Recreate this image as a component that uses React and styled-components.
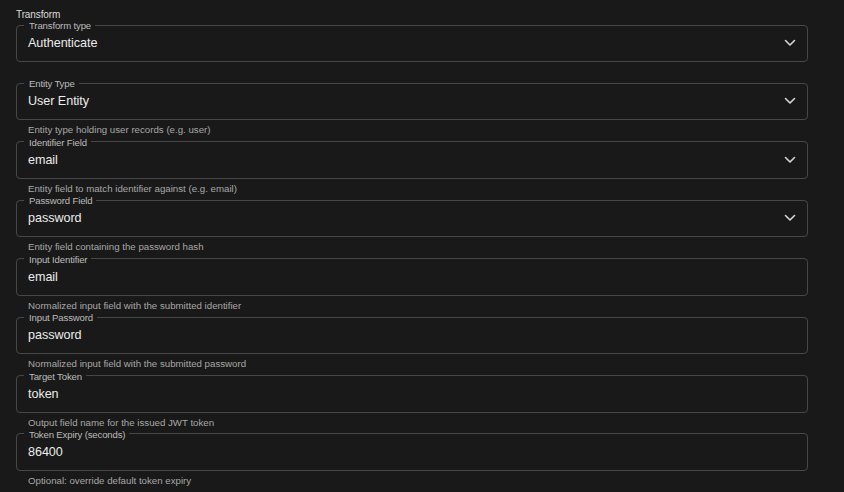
import React from 'react';
import styled, { createGlobalStyle } from 'styled-components';

const GlobalStyle = createGlobalStyle`
  html, body {
    margin: 0;
    padding: 0;
    background: #191919;
  }
  body {
    font-family: "Liberation Sans", Arial, sans-serif;
    -webkit-font-smoothing: antialiased;
  }
`;

const Page = styled.div`
  padding: 8px 0 0 16px;
  width: 792px;
`;

const Title = styled.div`
  color: #dcdcdc;
  font-size: 10px;
  letter-spacing: -0.1px;
  line-height: 12px;
  margin-bottom: -2px;
  padding-top: 1px;
`;

const Field = styled.div`
  display: flex;
  flex-direction: column;
`;

const Box = styled.fieldset`
  margin: 0;
  padding: 0;
  border: 1px solid #474747;
  border-radius: 4px;
  min-width: 0;
`;

const Legend = styled.legend`
  margin-left: 7px;
  padding: 0 4px 0 5px;
  color: #bcbcbc;
  font-size: 9.6px;
  letter-spacing: -0.15px;
  line-height: 12px;
  transform: translateY(1px);
`;

const Control = styled.div`
  display: flex;
  align-items: center;
  justify-content: space-between;
  height: 24px;
  margin-bottom: 6px;
  padding: 0 11px;
  color: #ececec;
  font-size: 12.6px;
  letter-spacing: -0.05px;
`;

const Helper = styled.div`
  height: 11.43px;
  padding: 4px 0 0 12px;
  line-height: 11.43px;
  color: #a8a8a8;
  font-size: 9.7px;
`;

const Chevron = () => (
  <svg width="12" height="8" viewBox="0 0 12 8" fill="none">
    <path d="M1.5 1.5 L6 6 L10.5 1.5" stroke="#d6d6d6" strokeWidth="1.6" strokeLinecap="round" strokeLinejoin="round" />
  </svg>
);

const fields = [
  { label: 'Transform type', value: 'Authenticate', select: true, help: '' },
  { label: 'Entity Type', value: 'User Entity', select: true, help: 'Entity type holding user records (e.g. user)' },
  { label: 'Identifier Field', value: 'email', select: true, help: 'Entity field to match identifier against (e.g. email)' },
  { label: 'Password Field', value: 'password', select: true, help: 'Entity field containing the password hash' },
  { label: 'Input Identifier', value: 'email', help: 'Normalized input field with the submitted identifier' },
  { label: 'Input Password', value: 'password', help: 'Normalized input field with the submitted password' },
  { label: 'Target Token', value: 'token', help: 'Output field name for the issued JWT token' },
  { label: 'Token Expiry (seconds)', value: '86400', help: 'Optional: override default token expiry' },
];

export default function App() {
  return (
    <>
      <GlobalStyle />
      <Page>
        <Title>Transform</Title>
        {fields.map((f) => (
          <Field key={f.label}>
            <Box>
              <Legend>{f.label}</Legend>
              <Control>
                <span>{f.value}</span>
                {f.select && <Chevron />}
              </Control>
            </Box>
            <Helper>{f.help}</Helper>
          </Field>
        ))}
      </Page>
    </>
  );
}
